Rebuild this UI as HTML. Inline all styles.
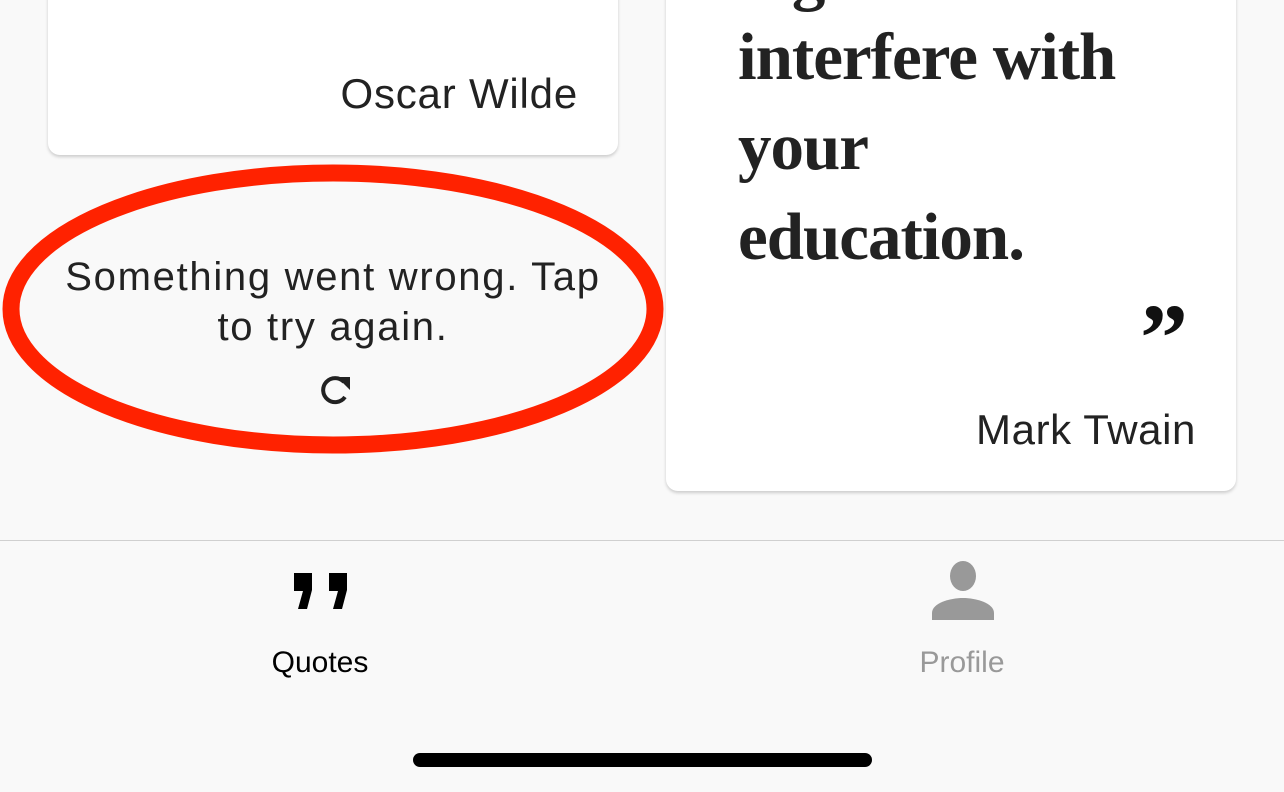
<!DOCTYPE html>
<html><head><style>
body{margin:0;width:1284px;height:792px;background:#f9f9f9;position:relative;overflow:hidden;font-family:"Liberation Sans",sans-serif}
.card{position:absolute;background:#fff;border-radius:12px;box-shadow:0 2px 3px rgba(0,0,0,.18)}
.q{position:absolute;left:738px;font-family:"Liberation Serif",serif;font-weight:bold;font-size:67px;color:#222;letter-spacing:-1px;line-height:90px}
</style></head><body>
<div class="card" style="left:48px;top:-20px;width:570px;height:175px"></div>
<div style="position:absolute;left:510px;top:-58px;font-family:'Liberation Serif',serif;font-size:80px;font-weight:bold;color:#111">”</div>
<div style="position:absolute;right:706px;top:70px;font-size:42px;color:#222;letter-spacing:.8px">Oscar Wilde</div>

<div class="card" style="left:666px;top:-20px;width:570px;height:511px"></div>
<div class="q" style="top:-70px">ing</div>
<div class="q" style="top:12px">interfere with</div>
<div class="q" style="top:102px">your</div>
<div class="q" style="top:192px">education.</div>
<div style="position:absolute;left:1140px;top:290px;font-family:'Liberation Serif',serif;font-size:96px;font-weight:bold;color:#111;line-height:96px">”</div>
<div style="position:absolute;right:88px;top:406px;font-size:42px;color:#222;letter-spacing:.6px">Mark Twain</div>

<svg style="position:absolute;left:0;top:0" width="1284" height="792">
<ellipse cx="333" cy="309" rx="322" ry="136" fill="none" stroke="#ff2200" stroke-width="17"/>
<path d="M344 382 A12 12 0 1 0 345 397" fill="none" stroke="#222" stroke-width="4"/>
<path d="M337 377 L350 377 L350 390 Z" fill="#222"/>
<path d="M294 573h18v17l-5 19h-9l5-18h-9z M329 573h18v17l-5 19h-9l5-18h-9z" fill="#000"/>
<ellipse cx="963" cy="576" rx="13" ry="15" fill="#999"/>
<path d="M932 620v-7c0-10 18-15 31-15s31 5 31 15v7z" fill="#999"/>
<rect x="413" y="753" width="459" height="14" rx="7" fill="#000"/>
</svg>
<div style="position:absolute;left:0;width:666px;top:252px;text-align:center;font-size:40px;color:#222;line-height:50px;letter-spacing:1.7px">Something went wrong. Tap<br>to try again.</div>
<div style="position:absolute;left:0;top:540px;width:1284px;height:1px;background:#d0d0d0"></div>
<div style="position:absolute;left:220px;width:200px;top:646px;text-align:center;font-size:30px;color:#000">Quotes</div>
<div style="position:absolute;left:862px;width:200px;top:646px;text-align:center;font-size:30px;color:#999">Profile</div>
</body></html>
